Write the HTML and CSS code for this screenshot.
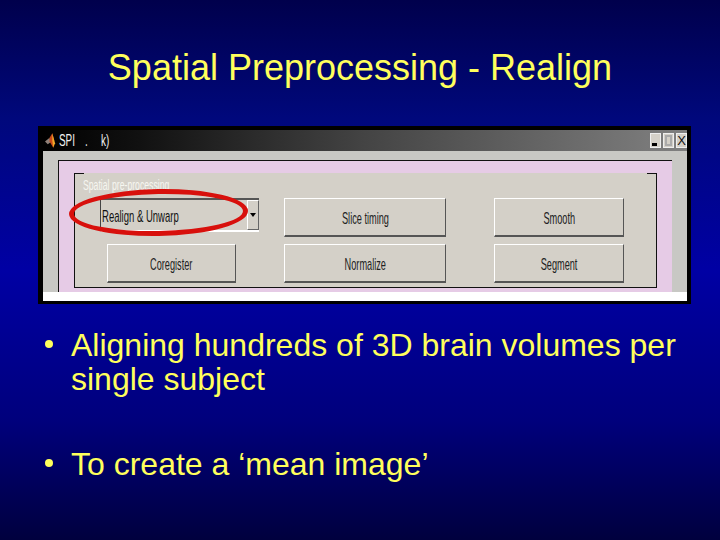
FILE: index.html
```html
<!DOCTYPE html>
<html lang="en">
<head>
<meta charset="utf-8">
<title>Spatial Preprocessing - Realign</title>
<link rel="stylesheet" href="styles.css">
</head>
<body>
<main class="slide">
  <h1 class="title">Spatial Preprocessing - Realign</h1>
  <section class="window">
    <div class="titlebar">
      <svg class="logo" viewBox="0 0 12 16" width="11" height="15"><path d="M0 9 L5 5 L6 10 L3 12Z" fill="#8f8078"/><path d="M5 5 L8 0 L10 8 L9 16 L5 9Z" fill="#c8481a"/><path d="M8 0 L11 11 L9 16 L8 8Z" fill="#f0a828"/></svg>
      <span class="wintitle"><span class="sp">SPI</span><span class="dot">.</span><span>k)</span></span>
      <div class="controls">
        <span class="ctl"><i class="min"></i></span>
        <span class="ctl"><i class="max"></i></span>
        <span class="ctl close">X</span>
      </div>
    </div>
    <div class="body">
      <div class="pink">
        <div class="panel">
          <div class="legend"><span>Spatial pre-processing</span></div>
          <div class="grid">
            <div class="select">
              <span class="label sel-label">Realign &amp; Unwarp</span>
              <span class="arrow"></span>
            </div>
            <button class="btn"><span class="label">Slice timing</span></button>
            <button class="btn last"><span class="label">Smooth</span></button>
            <button class="btn core"><span class="label">Coregister</span></button>
            <button class="btn"><span class="label">Normalize</span></button>
            <button class="btn last"><span class="label">Segment</span></button>
          </div>
          <div class="ring"></div>
        </div>
      </div>
    </div>
    <div class="strip"></div>
  </section>
  <ul class="points">
    <li>Aligning hundreds of 3D brain volumes per single subject</li>
    <li>To create a ‘mean image’</li>
  </ul>
</main>
</body>
</html>
```
FILE: styles.css
```css
* { box-sizing: border-box; }
html, body { margin: 0; padding: 0; }
body { width: 720px; height: 540px; overflow: hidden; font-family: "Liberation Sans", Arial, sans-serif; }
.slide {
  width: 720px; height: 540px; padding-top: 46px; overflow: hidden;
  background: linear-gradient(180deg, #00004c 0%, #00087c 22%, #0000a4 50%, #00007c 78%, #00003e 100%);
  color: #ffff5c;
}
.title {
  margin: 0; text-align: center; font-weight: 400; font-size: 36px; line-height: 44px;
  height: 44px;
}
.window {
  width: 653px; height: 178px; margin: 36px 0 0 38px;
  background: #000; padding: 4px 4px 3px 5px;
  display: flex; flex-direction: column;
}
.titlebar {
  height: 21px; flex: none; display: flex; align-items: center; padding: 0 0 0 2px;
  background: linear-gradient(90deg, #000 0%, #111 15%, #444 50%, #808080 100%);
}
.logo { flex: none; }
.wintitle { display: flex; margin-left: 3px; font-size: 16px; color: #f0f0f0; width: 60px; align-items: center; }
.wintitle span { display: inline-block; transform: scaleX(.62); transform-origin: left center; }
.wintitle .sp { width: 20px; flex: none; }
.wintitle .dot { margin-left: 6px; width: 16px; flex: none; }
.controls { margin-left: auto; display: flex; gap: 2px; }
.ctl {
  width: 11px; height: 15px; background: #d4d0c8; color: #111; font-size: 12px; line-height: 15px; text-align: center;
  display: flex; align-items: center; justify-content: center; border: 1px solid #eee;
}
.ctl .min { width: 5px; height: 3px; background: #000; margin-top: 8px; margin-right: 2px; }
.ctl .max { width: 7px; height: 11px; border: 2px solid #aaa; }
.ctl.close { font-size: 13px; }
.body { height: 141px; flex: none; background: #c8c8c4; padding: 9px 15px 0 15px; }
.pink { height: 132px; background: #e6cbe6; border-top: 1px solid #111; border-left: 1px solid #111; padding: 12px 15px 4px 15px; }
.panel { position: relative; height: 115px; background: #d4d0c8; border-left: 1px solid #111; border-right: 1px solid #111; border-bottom: 1px solid #111; }
.panel::before, .panel::after { content: ""; position: absolute; top: 0; width: 9px; height: 1px; background: #111; }
.panel::before { left: 0; }
.panel::after { right: 0; }
.legend { height: 25px; padding: 4px 0 0 8px; font-size: 14px; color: #f6f6f0; }
.legend span, .label { display: inline-block; transform: scaleX(.62); }
.legend span { transform-origin: left center; white-space: nowrap; }
.grid {
  display: grid; grid-template-columns: 159px 162px 153px; column-gap: 25px; row-gap: 7px;
  grid-template-rows: 39px 39px; margin-left: 25px;
}
.select {
  height: 34px; position: relative; display: flex; align-items: center; justify-content: space-between;
  background: #d4d0c8; border-top: 2px solid #555; border-left: 1px solid #444; border-bottom: 2px solid #fff;
}
.sel-label { transform-origin: left center; font-size: 17px; color: #111; margin: 3px 0 0 1px; white-space: nowrap; width: 100px; transform: scaleX(.56); }
.arrow { width: 12px; height: 30px; background: #d4d0c8; border: 1px solid #666; border-left-color: #fff; border-top-color: #fff; position: relative; }
.arrow::after { content: ""; position: absolute; left: 2px; top: 12px; border: 3px solid transparent; border-top: 4px solid #000; }
.btn {
  padding: 3px 0 0; margin: 0; height: 39px; font: inherit; font-size: 17px; color: #222; background: #d4d0c8;
  border: 1px solid #fff; border-right-color: #555; border-bottom: 2px solid #555;
  display: flex; align-items: center; justify-content: center;
}
.btn .label { transform: scaleX(.54); }
.last { width: 130px; justify-self: end; }
.core { width: 129px; margin-left: 7px; justify-self: start; }
.ring {
  position: absolute; left: -6px; top: 16px; width: 179px; height: 47px;
  border: 5px solid #d8100c; border-radius: 50%; transform: rotate(-1deg);
}
.strip { height: 9px; flex: none; background: #fff; }
.points { list-style: none; margin: 24px 0 0 0; padding: 0 0 0 71px; font-size: 32px; line-height: 34px; }
.points li { position: relative; margin-bottom: 51px; width: 620px; }
.points li::before { content: ""; position: absolute; left: -26px; top: 12px; width: 8px; height: 8px; border-radius: 50%; background: #ffff5c; }
```
